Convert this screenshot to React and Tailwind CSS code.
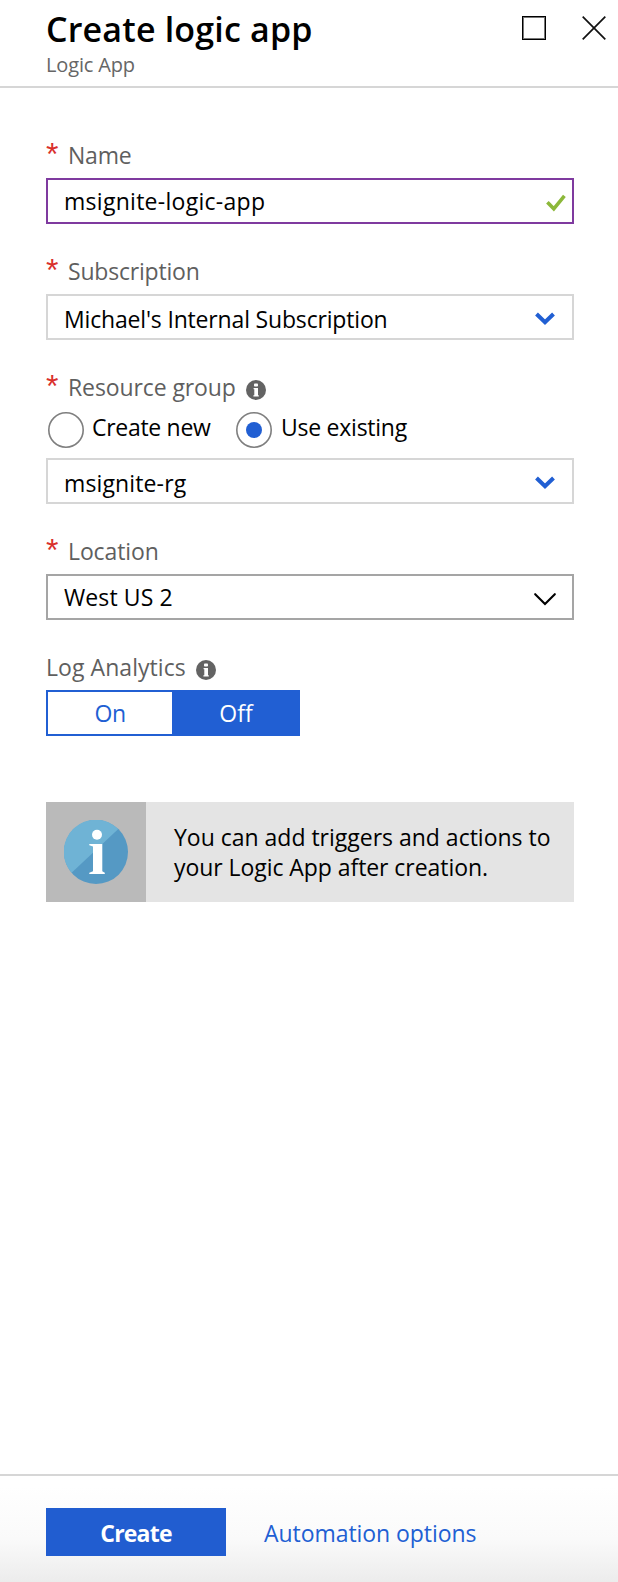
import React from "react";

function Chevron({ thin }) {
  return thin ? (
    <svg width="22" height="13" viewBox="0 0 22 13" fill="none" stroke="#000" strokeWidth="2.1" strokeLinecap="round" className="mt-[5px] mr-[16px]">
      <path d="M1.2 1.2L11 11L20.8 1.2" />
    </svg>
  ) : (
    <svg width="20" height="14" viewBox="0 0 20 14" fill="none" stroke="#215fd3" strokeWidth="4" className="mt-[4px] mr-[17px]">
      <path d="M1.5 2L10 10.3L18.5 2" />
    </svg>
  );
}

function InfoDot() {
  return (
    <svg width="20" height="20" viewBox="0 0 20 20">
      <circle cx="10" cy="10" r="10" fill="#636363" />
      <rect x="8" y="3.6" width="4" height="3" rx="0.8" fill="#fff" />
      <path d="M7.6 8H12V15.3H12.8V16.6H7.4V15.3H8.3V9.3H7.6Z" fill="#fff" />
    </svg>
  );
}

function Label({ required, info, className, children }) {
  return (
    <div className="mb-2 flex h-[30px] items-start text-[#5f5f5f]">
      {required && (
        <span className="w-[22px] font-['Liberation_Sans',sans-serif] text-[32px] leading-[28px] text-[#d9302c]">*</span>
      )}
      <span className={className}>{children}</span>
      {info && <span className="mt-2 ml-[10px]"><InfoDot /></span>}
    </div>
  );
}

function Radio({ checked }) {
  return (
    <svg width="36" height="36" viewBox="0 0 36 36">
      <circle cx="18" cy="18" r="17.2" fill="#fff" stroke="#7f7f7f" strokeWidth="1.6" />
      {checked && <circle cx="18" cy="18" r="8" fill="#215fd3" />}
    </svg>
  );
}

export default function App() {
  return (
    <div className="flex h-[1582px] w-[618px] flex-col overflow-hidden bg-white font-['Open_Sans','Noto_Sans',sans-serif] text-[23px] leading-[30px] whitespace-nowrap text-black">
      <header className="flex h-[88px] shrink-0 justify-between border-b-2 border-[#d6d6d6] pt-[7px] pl-[46px]">
        <div>
          <h1 className="text-[34px] leading-[44px] font-semibold tracking-[0.18px]">Create logic app</h1>
          <p className="text-[20px] leading-[28px] tracking-[-0.15px] text-[#666]">Logic App</p>
        </div>
        <div className="flex gap-9 pt-[9px] pr-[12px]">
          <svg width="24" height="24" viewBox="0 0 24 24" fill="none">
            <rect x="1.5" y="1.5" width="21" height="21" stroke="#777" />
            <rect x="0.5" y="0.5" width="23" height="23" stroke="#000" />
          </svg>
          <svg width="24" height="24" viewBox="0 0 24 24" fill="none" stroke="#111" strokeWidth="1.7">
            <path d="M0.7 0.7L23.3 23.3M23.3 0.7L0.7 23.3" />
          </svg>
        </div>
      </header>

      <main className="flex-1 pt-[52px] pr-[44px] pl-[46px]">
        <Label required className="tracking-[-0.2px]">Name</Label>
        <div className="mb-8 flex h-[46px] items-center justify-between border-2 border-[#7f3a9f] pl-[16px]">
          <span className="tracking-[0.28px]">msignite-logic-app</span>
          <svg width="20" height="18" viewBox="0 0 20 18" fill="none" stroke="#8cb83a" strokeWidth="3.6" className="mt-[3px] mr-[6px]">
            <path d="M1.4 8.2L7.8 14.8L18.4 1.8" />
          </svg>
        </div>

        <Label required className="tracking-[-0.2px]">Subscription</Label>
        <div className="mb-8 flex h-[46px] items-center justify-between border-2 border-[#d6d6d6] pl-[16px]">
          <span className="pt-1 tracking-[-0.17px]">Michael's Internal Subscription</span>
          <Chevron />
        </div>

        <Label required info className="tracking-[-0.1px]">Resource group</Label>
        <div className="mt-[10px] mb-[10px] flex h-9 items-start pl-[2px]">
          <Radio />
          <span className="ml-2 w-[144px] tracking-[-0.3px]">Create new</span>
          <Radio checked />
          <span className="ml-[9px] tracking-[-0.25px]">Use existing</span>
        </div>
        <div className="mb-8 flex h-[46px] items-center justify-between border-2 border-[#d6d6d6] pl-[16px]">
          <span className="pt-1 tracking-[0.13px]">msignite-rg</span>
          <Chevron />
        </div>

        <Label required className="tracking-[-0.12px]">Location</Label>
        <div className="mb-8 flex h-[46px] items-center justify-between border-2 border-[#a5a5a5] pl-[16px]">
          <span className="tracking-[0.1px]">West US 2</span>
          <Chevron thin />
        </div>

        <Label info className="tracking-[0.06px]">Log Analytics</Label>
        <div className="mb-[66px] flex h-[46px] w-[254px] border-2 border-[#215fd3] text-center leading-[42px]">
          <span className="w-[124px] tracking-[-0.4px] text-[#215fd3]">On</span>
          <span className="flex-1 bg-[#215fd3] pl-[2px] text-white">Off</span>
        </div>

        <div className="flex h-[100px] bg-[#e4e4e4]">
          <div className="flex w-[100px] items-center justify-center bg-[#bababa]">
            <svg width="64" height="64" viewBox="0 0 64 64">
              <circle cx="32" cy="32" r="32" fill="#5599c4" />
              <path d="M7.6 52.7A32 32 0 0 1 54.3 9Z" fill="#6fb3d5" />
              <circle cx="33" cy="14.8" r="5" fill="#fff" />
              <path d="M25.3 24H38.3V51.3L40.8 52.8V54H25.3V52.8L29 51.3V26.5L25.3 25.2Z" fill="#fff" />
            </svg>
          </div>
          <div className="flex flex-col justify-center pl-[28px]">
            <span className="tracking-[-0.01px]">You can add triggers and actions to</span>
            <span className="tracking-[-0.06px]">your Logic App after creation.</span>
          </div>
        </div>
      </main>

      <footer className="flex h-[108px] shrink-0 items-start border-t-2 border-[#d6d6d6] bg-linear-to-b from-white from-10% via-[#fafafa] via-60% to-[#ececec] pt-8 pl-[46px]">
        <button className="h-12 w-[180px] bg-[#215dd0] pt-[2px] font-bold tracking-[-0.8px] text-white">Create</button>
        <a className="mt-[10px] ml-[38px] tracking-[-0.06px] text-[#215fd3]">Automation options</a>
      </footer>
    </div>
  );
}
